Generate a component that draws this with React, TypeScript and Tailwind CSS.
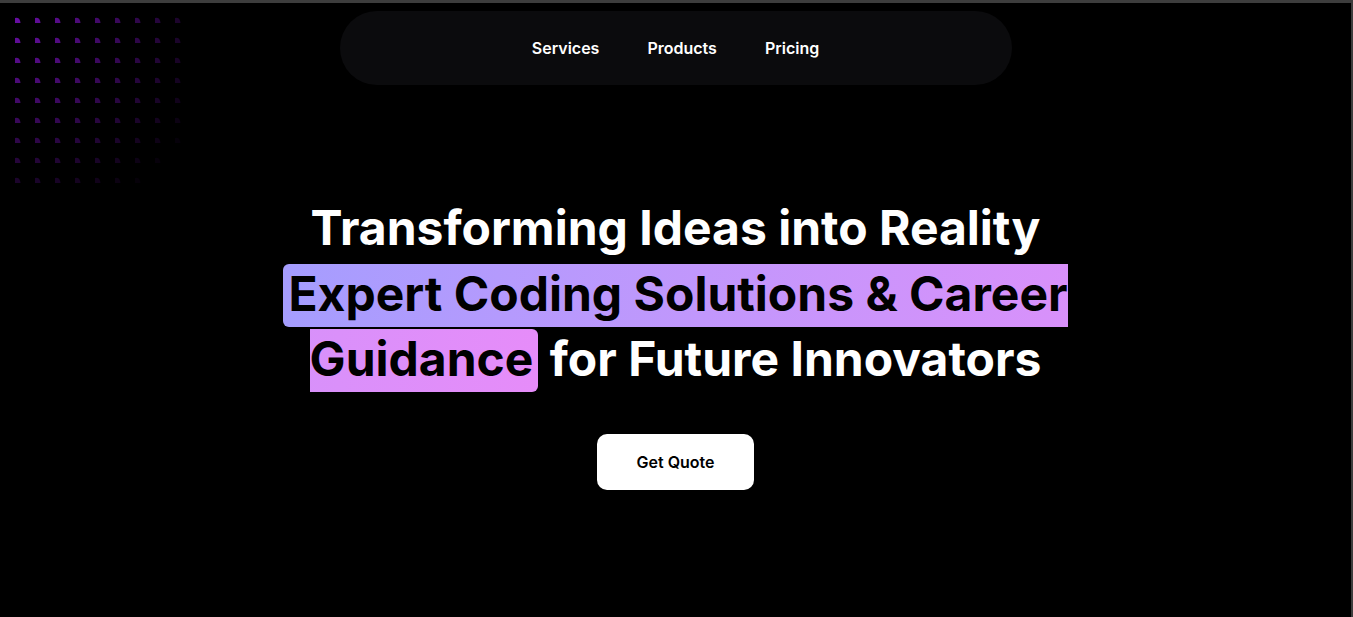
import React from "react";

function Dots() {
  const dots: React.ReactNode[] = [];
  for (let r = 0; r < 9; r++) {
    for (let c = 0; c < 9; c++) {
      const x = 15 + c * 20;
      const y = 17 + r * 20;
      const d = Math.sqrt(x * x + y * y);
      const o = Math.max(0, 1 - d / 235);
      if (o <= 0) continue;
      dots.push(
        <path
          key={`${r}-${c}`}
          d={`M${x} ${y + 6} L${x} ${y + 1} Q${x + 5} ${y} ${x + 5.5} ${y + 6} Z`}
          fill="#7210b4"
          opacity={o}
        />
      );
    }
  }
  return (
    <svg className="absolute left-0 top-0 pointer-events-none" width="200" height="200" viewBox="0 0 200 200">
      {dots}
    </svg>
  );
}

export default function App() {
  return (
    <div
      className="relative h-screen w-full overflow-hidden bg-black border-t-[3px] border-r-2 border-[#3d3d3d] text-white"
      style={{ fontFamily: "Inter, 'Noto Sans', sans-serif" }}
    >
      <div className="absolute left-0 -top-[3px]">
        <Dots />
      </div>
      <div className="relative flex flex-col items-center">
        <nav className="mt-[8px] flex h-[74px] w-[672px] items-center justify-center gap-[48px] rounded-full bg-[#0b0b0d] text-[16px] font-semibold">
          <a>Services</a>
          <a>Products</a>
          <a>Pricing</a>
        </nav>
        <h1 className="mt-[110px] w-[820px] text-center text-[48px] font-bold leading-[65.5px]">
          Transforming Ideas into Reality{" "}
          <span className="rounded-md bg-gradient-to-r from-[#a59dfe] to-[#e68cf9] px-[5px] pt-0 pb-[4px] text-black">
            Expert Coding Solutions &amp; Career Guidance
          </span>{" "}
          for Future Innovators
        </h1>
        <button className="mt-[42px] h-[56px] w-[157px] rounded-[10px] bg-white text-[16px] font-semibold text-black">
          Get Quote
        </button>
      </div>
    </div>
  );
}
